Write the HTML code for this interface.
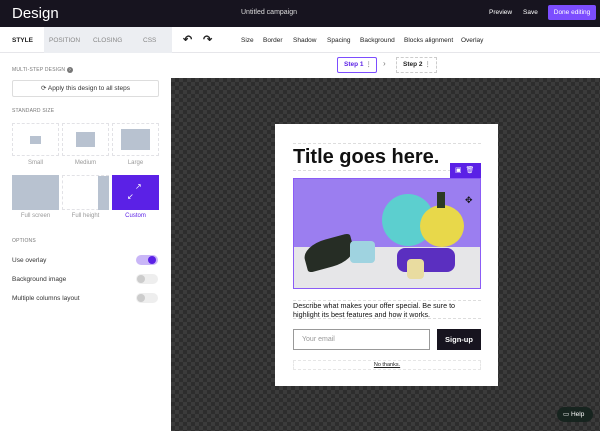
<!DOCTYPE html>
<html><head><style>
*{box-sizing:border-box;margin:0;padding:0}
body{width:600px;height:431px;overflow:hidden;font-family:"Liberation Sans",sans-serif;background:#fff;position:relative;color:#222}
.a{position:absolute}
.top{left:0;top:0;width:600px;height:27px;background:#17141f;color:#fff}
.tabs{top:27px;left:0;width:600px;height:26px;background:#fff;border-bottom:1px solid #e6e6ea;font-size:6.5px}
.canvas{left:171px;top:78px;width:429px;height:353px;background-color:#3b3b3b;background-image:linear-gradient(45deg,#2d2d2d 25%,transparent 25%,transparent 75%,#2d2d2d 75%),linear-gradient(45deg,#2d2d2d 25%,transparent 25%,transparent 75%,#2d2d2d 75%);background-size:8px 8px;background-position:0 0,4px 4px}
.left{left:0;top:53px;width:171px;height:378px;background:#fff}
.lbl{font-size:5px;color:#777;letter-spacing:.2px}
.tile{border:1px dashed #e2e2e6;background:#fff}
.tl{font-size:6px;color:#999;text-align:center;width:47px}
.opt{font-size:6.5px;color:#333}
.tg{width:22px;height:10px;border-radius:5px;background:#eee}
.tg i{position:absolute;left:1px;top:1px;width:8px;height:8px;border-radius:50%;background:#ccc}
</style></head><body>
<div class="a top">
 <div class="a" style="left:12px;top:5px;font-size:15px">Design</div>
 <div class="a" style="left:241px;top:9px;font-size:7px;color:#ddd">Untitled campaign</div>
 <div class="a" style="left:489px;top:9px;font-size:6.5px">Preview</div>
 <div class="a" style="left:523px;top:9px;font-size:6.5px">Save</div>
 <div class="a" style="left:548px;top:5px;width:48px;height:15px;background:#7c4dff;border-radius:2px;font-size:6.5px;text-align:center;line-height:15px">Done editing</div>
</div>
<div class="a tabs">
 <div class="a" style="left:44px;top:0;width:128px;height:26px;background:#eceef2"></div>
 <div class="a" style="left:12px;top:10px;font-weight:bold">STYLE</div>
 <div class="a" style="left:49px;top:10px;color:#888">POSITION</div>
 <div class="a" style="left:93px;top:10px;color:#888">CLOSING</div>
 <div class="a" style="left:143px;top:10px;color:#888">CSS</div>
 <div class="a" style="left:183px;top:6px;font-size:11px;font-weight:bold">↶</div>
 <div class="a" style="left:203px;top:6px;font-size:11px;font-weight:bold">↷</div>
 <div class="a" style="left:241px;top:10px">Size</div>
 <div class="a" style="left:263px;top:10px">Border</div>
 <div class="a" style="left:293px;top:10px">Shadow</div>
 <div class="a" style="left:327px;top:10px">Spacing</div>
 <div class="a" style="left:360px;top:10px">Background</div>
 <div class="a" style="left:404px;top:10px">Blocks alignment</div>
 <div class="a" style="left:461px;top:10px">Overlay</div>
</div>
<div class="a" style="left:171px;top:53px;width:429px;height:25px;background:#fff">
 <div class="a" style="left:166px;top:4px;width:40px;height:16px;border:1.5px solid #7c4dff;border-radius:2px;font-size:6.5px;color:#5b21e6;font-weight:bold;line-height:13px;padding-left:6px">Step 1 <span style="color:#999">⋮</span></div>
 <div class="a" style="left:212px;top:6px;font-size:8px;color:#777">›</div>
 <div class="a" style="left:225px;top:4px;width:41px;height:16px;border:1px dashed #ccc;font-size:6.5px;font-weight:bold;line-height:14px;padding-left:6px">Step 2 <span style="color:#999">⋮</span></div>
</div>
<div class="a left">
 <div class="a lbl" style="left:12px;top:14px">MULTI-STEP DESIGN <span style="display:inline-block;width:6px;height:6px;border-radius:50%;background:#777;color:#fff;font-size:4px;text-align:center;line-height:6px">?</span></div>
 <div class="a" style="left:12px;top:27px;width:147px;height:17px;border:1px solid #ddd;border-radius:2px;font-size:6.5px;text-align:center;line-height:15px;color:#333">⟳ Apply this design to all steps</div>
 <div class="a lbl" style="left:12px;top:55px">STANDARD SIZE</div>
 <div class="a tile" style="left:12px;top:70px;width:47px;height:33px"><div class="a" style="left:17px;top:12px;width:11px;height:8px;background:#b8c2d0"></div></div>
 <div class="a tile" style="left:62px;top:70px;width:47px;height:33px"><div class="a" style="left:13px;top:8px;width:19px;height:15px;background:#b8c2d0"></div></div>
 <div class="a tile" style="left:112px;top:70px;width:47px;height:33px"><div class="a" style="left:8px;top:5px;width:29px;height:21px;background:#b8c2d0"></div></div>
 <div class="a tl" style="left:12px;top:107px">Small</div>
 <div class="a tl" style="left:62px;top:107px">Medium</div>
 <div class="a tl" style="left:112px;top:107px">Large</div>
 <div class="a" style="left:12px;top:122px;width:47px;height:35px;background:#b8c2d0"></div>
 <div class="a tile" style="left:62px;top:122px;width:47px;height:35px"><div class="a" style="left:35px;top:0;width:11px;height:34px;background:#b8c2d0"></div></div>
 <div class="a" style="left:112px;top:122px;width:47px;height:35px;background:#5b21e6;color:#fff;font-size:8px"><span class="a" style="left:23px;top:7px">↗</span><span class="a" style="left:15px;top:17px">↙</span></div>
 <div class="a tl" style="left:12px;top:160px">Full screen</div>
 <div class="a tl" style="left:62px;top:160px">Full height</div>
 <div class="a tl" style="left:112px;top:160px;color:#5b21e6">Custom</div>
 <div class="a lbl" style="left:12px;top:185px">OPTIONS</div>
 <div class="a opt" style="left:12px;top:204px">Use overlay</div>
 <div class="a tg" style="left:136px;top:202px;background:#c9b6f7"><i style="left:12px;background:#5b21e6"></i></div>
 <div class="a opt" style="left:12px;top:223px">Background image</div>
 <div class="a tg" style="left:136px;top:221px"><i></i></div>
 <div class="a opt" style="left:12px;top:242px">Multiple columns layout</div>
 <div class="a tg" style="left:136px;top:240px"><i></i></div>
</div>
<div class="a canvas"></div>
<div class="a" style="left:275px;top:124px;width:223px;height:262px;background:#fff"></div>
<div class="a" style="left:293px;top:143px;width:188px;height:28px;border-top:1px dashed #ddd;border-bottom:1px dashed #ddd;font-size:20px;font-weight:bold;color:#111;line-height:26px">Title goes here.</div>
<div class="a" style="left:293px;top:178px;width:188px;height:111px;border:1px solid #8b5cf6;overflow:hidden;background:#e6e6e8">
 <div class="a" style="left:0;top:0;width:188px;height:68px;background:#9b7ef0"></div>
 <div class="a" style="left:88px;top:15px;width:52px;height:52px;border-radius:50%;background:#5ccfcf"></div>
 <div class="a" style="left:103px;top:69px;width:58px;height:24px;border-radius:8px;background:#5b2fc0"></div>
 <div class="a" style="left:126px;top:26px;width:44px;height:42px;border-radius:50%;background:#e8d84a"></div>
 <div class="a" style="left:143px;top:13px;width:8px;height:16px;background:#2c3a24"></div>
 <div class="a" style="left:10px;top:60px;width:50px;height:28px;border-radius:50% 10% 50% 10%;background:#262d25;transform:rotate(-15deg)"></div>
 <div class="a" style="left:56px;top:62px;width:25px;height:22px;background:#9fd3e0;border-radius:4px"></div>
 <div class="a" style="left:113px;top:80px;width:17px;height:20px;background:#e9dca0;border-radius:4px"></div>
</div>
<div class="a" style="left:450px;top:163px;width:31px;height:15px;background:#5b21e6;color:#fff;font-size:7px;line-height:15px;padding-left:5px">▣ &nbsp;🗑</div>
<div class="a" style="left:465px;top:195px;font-size:9px;color:#111">✥</div>
<div class="a" style="left:293px;top:300px;width:188px;height:19px;border-top:1px dashed #ddd;border-bottom:1px dashed #ddd;font-size:7.2px;line-height:9px;color:#111">Describe what makes your offer special. Be sure to highlight its best features and how it works.</div>
<div class="a" style="left:293px;top:329px;width:137px;height:21px;border:1px solid #999;font-size:7px;color:#999;line-height:19px;padding-left:8px">Your email</div>
<div class="a" style="left:437px;top:329px;width:44px;height:21px;background:#17141f;color:#fff;font-size:7.5px;font-weight:bold;text-align:center;line-height:21px">Sign-up</div>
<div class="a" style="left:293px;top:360px;width:188px;height:10px;border:1px dashed #e6e6e6;font-size:5.5px;text-align:center;line-height:9px;text-decoration:underline">No thanks.</div>
<div class="a" style="left:557px;top:407px;width:36px;height:15px;border-radius:8px;background:#17241f;color:#fff;font-size:6.5px;line-height:15px;padding-left:6px">▭ Help</div>
</body></html>
